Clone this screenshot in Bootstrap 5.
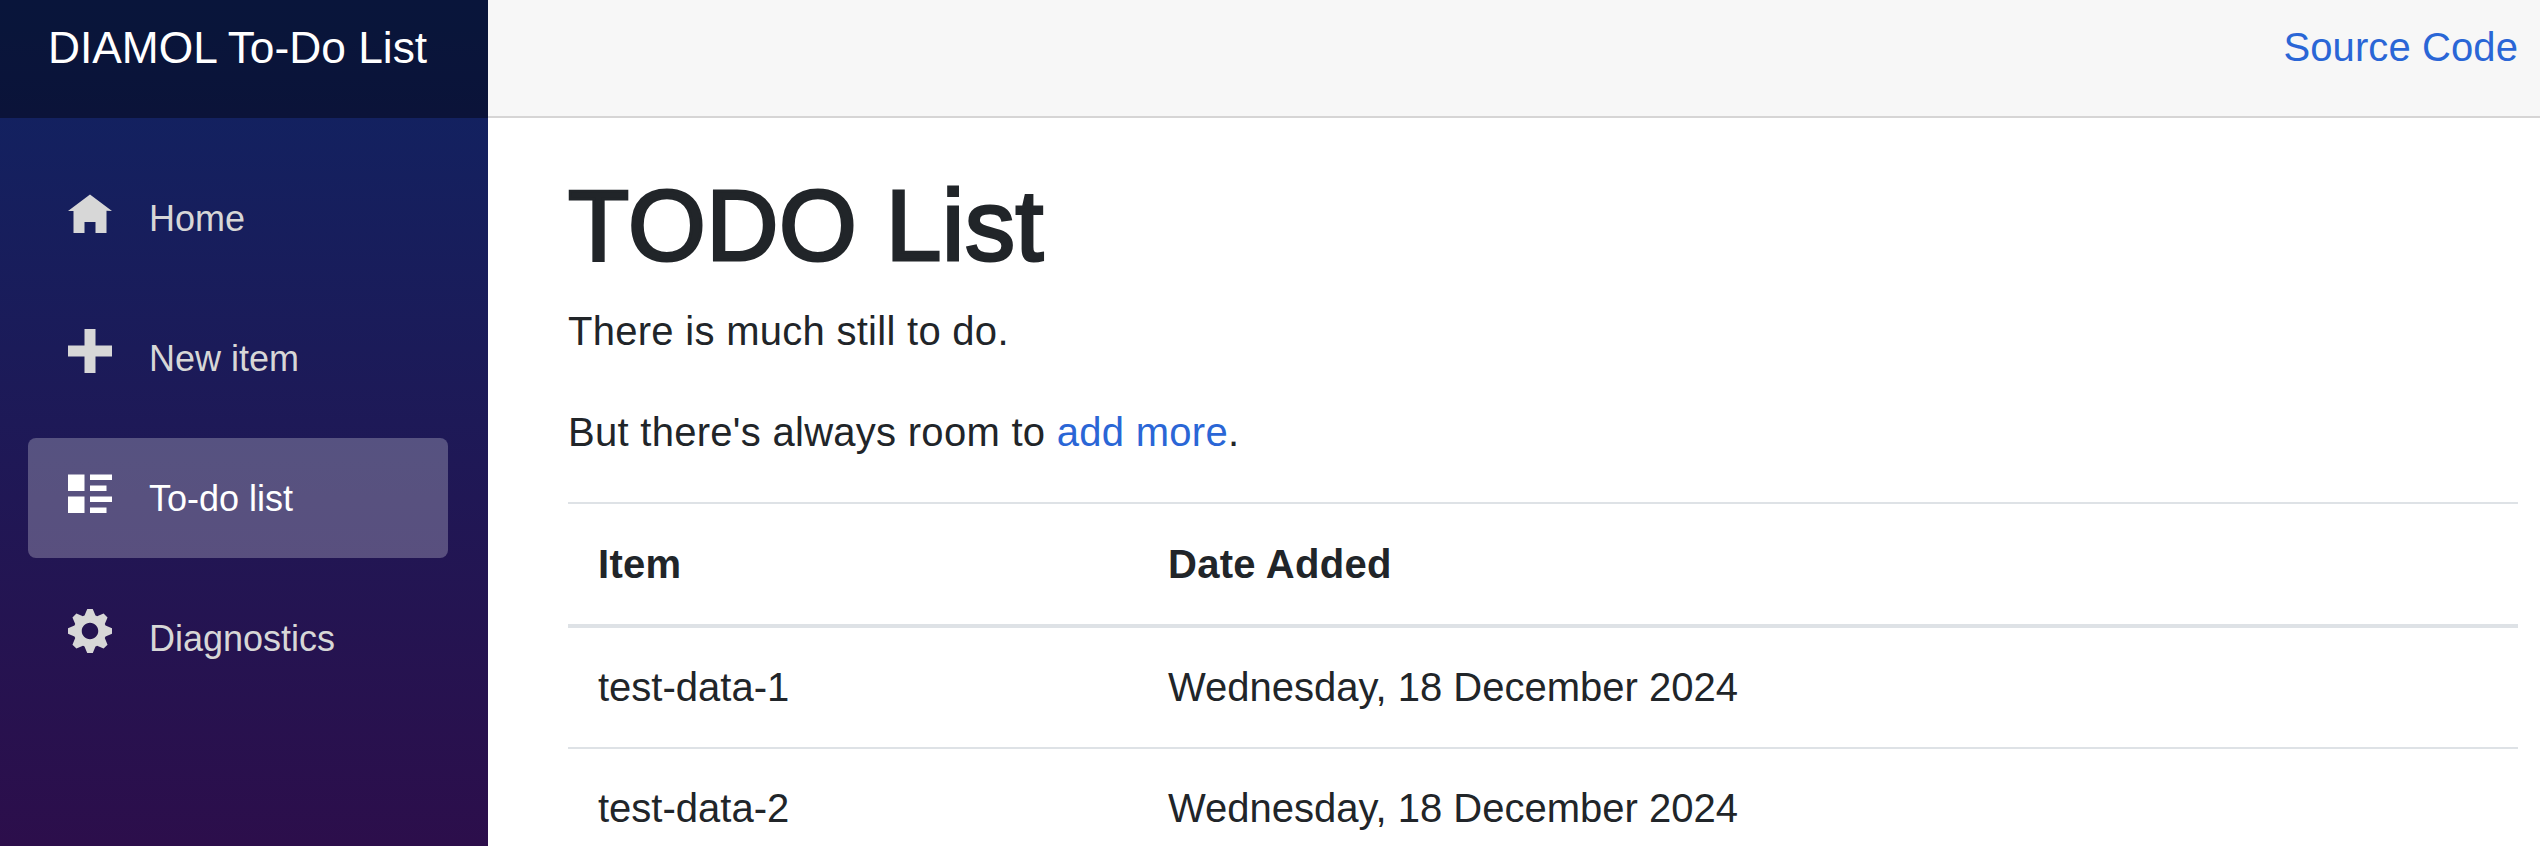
<!DOCTYPE html>
<html lang="en">
<head>
  <meta charset="UTF-8" />
  <meta name="viewport" content="width=device-width, initial-scale=1.0" />
  <title>TODO List</title>
  <link href="https://cdn.jsdelivr.net/npm/bootstrap@5.3.0/dist/css/bootstrap.min.css" rel="stylesheet" />
  <style>
    body {
      font-family: "Liberation Sans", Arial, sans-serif;
      font-size: 40px;
      color: #212529;
    }

    a {
      color: #2a66d6;
      text-decoration: none;
    }

    /* Sidebar */
    .side-panel {
      width: 488px;
      background-image: linear-gradient(180deg, #0f2463 0%, #2c0e4b 100%);
    }

    .brand-bar {
      height: 118px;
      padding: 18px 0 0 48px;
      background-color: rgba(0, 0, 0, 0.4);
      color: #fff;
      font-size: 44.3px;
      line-height: 60px;
    }

    .side-menu {
      padding: 40px 40px 0 28px;
    }

    .side-link {
      height: 120px;
      margin-bottom: 20px;
      padding: 2px 0 0 40px;
      gap: 37px;
      border-radius: 8px;
      color: #d7d7d7;
      font-size: 36px;
      line-height: 54px;
    }

    .side-link svg {
      width: 44px;
      height: 44px;
      margin-bottom: 16px;
      fill: currentColor;
    }

    .side-link.is-current {
      background-color: rgba(255, 255, 255, 0.25);
      color: #fff;
    }

    /* Main */
    .top-strip {
      height: 118px;
      padding: 17px 22px 0 0;
      background-color: #f7f7f7;
      border-bottom: 2px solid #d6d5d5;
      line-height: 60px;
      letter-spacing: 0.1px;
    }

    .page-body {
      padding: 47px 22px 0 80px;
    }

    .page-body h1 {
      font-size: 100px;
      line-height: 120px;
      margin-bottom: 16px;
      letter-spacing: 0.6px;
      -webkit-text-stroke: 3px #212529;
    }

    .page-body p {
      line-height: 60px;
      margin-bottom: 41px;
      letter-spacing: 0.28px;
    }

    .page-body p:last-of-type {
      margin-bottom: 40px;
    }

    .todo-table {
      table-layout: fixed;
      border-top: 2px solid #dee2e6;
      margin: 0;
    }

    .todo-table > thead > tr > th,
    .todo-table > tbody > tr > td {
      padding: 29px 30px 30px;
      line-height: 60px;
      color: #212529;
    }

    .todo-table > thead > tr > th {
      padding-top: 30px;
      border-bottom: 4px solid #dee2e6;
      letter-spacing: 0.3px;
    }

    .todo-table > tbody > tr > td {
      border-bottom: 2px solid #dee2e6;
    }

    .item-col {
      width: 570px;
    }
  </style>
</head>

<body class="vh-100 overflow-hidden">
  <div class="d-flex vh-100">
    <!-- Sidebar -->
    <div class="side-panel flex-shrink-0">
      <div class="brand-bar">DIAMOL To-Do List</div>
      <nav class="side-menu">
        <a class="side-link d-flex align-items-center" href="#">
          <svg viewBox="0 -1 8 8"><path d="M4 0l-4 3h1v4h2v-2h2v2h2v-4.03l1 .03-4-3z"/></svg>
          Home
        </a>
        <a class="side-link d-flex align-items-center" href="#">
          <svg viewBox="0 0 8 8"><path d="M3 0v3h-3v2h3v3h2v-3h3v-2h-3v-3h-2z"/></svg>
          New item
        </a>
        <a class="side-link is-current d-flex align-items-center" href="#">
          <svg viewBox="0 -1 8 8"><path d="M0 0v3h3v-3h-3zm4 0v1h4v-1h-4zm0 2v1h3v-1h-3zm-4 2v3h3v-3h-3zm4 0v1h4v-1h-4zm0 2v1h3v-1h-3z"/></svg>
          To-do list
        </a>
        <a class="side-link d-flex align-items-center" href="#">
          <svg viewBox="0 0 8 8"><path d="M3.5 0l-.5 1.19c-.1.03-.19.08-.28.13l-1.19-.5-.72.72.5 1.19c-.05.1-.09.18-.13.28l-1.19.5v1l1.19.5c.04.1.08.18.13.28l-.5 1.19.72.72 1.19-.5c.09.04.18.09.28.13l.5 1.19h1l.5-1.19c.09-.04.19-.08.28-.13l1.19.5.72-.72-.5-1.19c.04-.09.09-.19.13-.28l1.19-.5v-1l-1.19-.5c-.03-.09-.08-.19-.13-.28l.5-1.19-.72-.72-1.19.5c-.09-.04-.19-.09-.28-.13l-.5-1.19h-1zm.5 2.5c.83 0 1.5.67 1.5 1.5s-.67 1.5-1.5 1.5-1.5-.67-1.5-1.5.67-1.5 1.5-1.5z"/></svg>
          Diagnostics
        </a>
      </nav>
    </div>

    <!-- Main -->
    <div class="flex-grow-1">
      <div class="top-strip d-flex justify-content-end">
        <a href="#">Source Code</a>
      </div>
      <div class="page-body">
        <h1>TODO List</h1>
        <p>There is much still to do.</p>
        <p>But there's always room to <a href="#">add more</a>.</p>
        <table class="table todo-table">
          <thead>
            <tr>
              <th class="item-col">Item</th>
              <th>Date Added</th>
            </tr>
          </thead>
          <tbody>
            <tr>
              <td>test-data-1</td>
              <td>Wednesday, 18 December 2024</td>
            </tr>
            <tr>
              <td>test-data-2</td>
              <td>Wednesday, 18 December 2024</td>
            </tr>
          </tbody>
        </table>
      </div>
    </div>
  </div>
</body>
</html>
